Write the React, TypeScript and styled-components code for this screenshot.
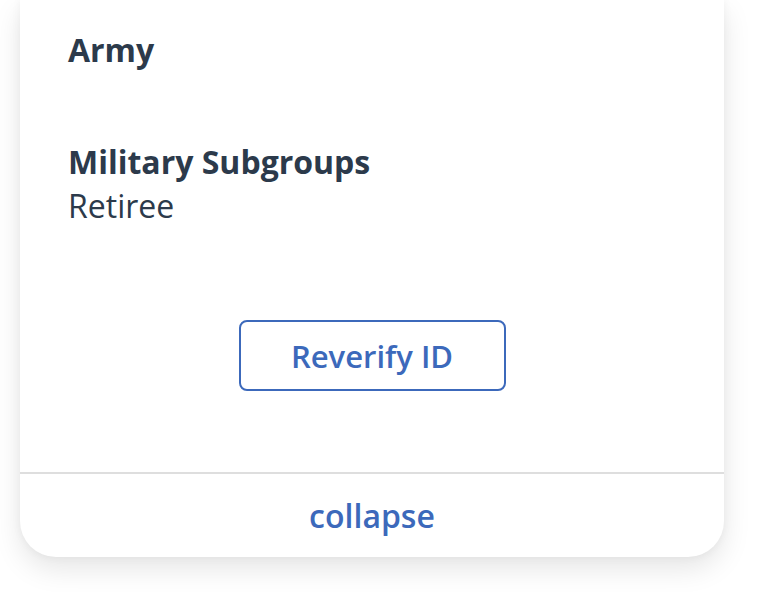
import styled, { createGlobalStyle } from 'styled-components';

const GlobalStyle = createGlobalStyle`
	html, body {
		margin: 0;
		padding: 0;
		background: #ffffff;
		font-family: 'Open Sans', 'Noto Sans', sans-serif;
	}
`;

const Page = styled.div`
	width: 764px;
	height: 592px;
	box-sizing: border-box;
	padding: 0 40px 0 20px;
	overflow: hidden;
`;

const Card = styled.div`
	width: 704px;
	height: 557px;
	background: #ffffff;
	border-radius: 0 0 36px 36px;
	box-shadow: 0 12px 28px rgba(0, 0, 0, 0.1), 0 0 10px rgba(0, 0, 0, 0.05);
	display: flex;
	flex-direction: column;
	box-sizing: border-box;
`;

const Body = styled.div`
	flex: 1;
	padding: 28px 48px 0;
	display: flex;
	flex-direction: column;
`;

const Field = styled.div<{ gap: number }>`
	margin-bottom: ${p => p.gap}px;
`;

const Label = styled.div`
	font-size: 32px;
	font-weight: 700;
	line-height: 44px;
	color: #2c3a4b;
`;

const Value = styled.div`
	font-size: 32px;
	font-weight: 400;
	line-height: 44px;
	color: #2c3a4b;
`;

const ButtonRow = styled.div`
	display: flex;
	justify-content: center;
	margin-top: 92px;
`;

const OutlineButton = styled.button`
	width: 267px;
	height: 71px;
	border: 2px solid #3c69bb;
	border-radius: 8px;
	background: #ffffff;
	color: #3c69bb;
	font-family: 'Open Sans', 'Noto Sans', sans-serif;
	font-size: 31px;
	font-weight: 600;
	cursor: pointer;
`;

const Footer = styled.div`
	border-top: 2px solid #dedede;
	height: 83px;
	display: flex;
	align-items: center;
	justify-content: center;
	color: #3c69bb;
	font-size: 32px;
	font-weight: 600;
`;

export default function App() {
	return (
		<>
			<GlobalStyle />
			<Page>
				<Card>
					<Body>
						<Field gap={68}>
							<Label>Army</Label>
						</Field>
						<Field gap={0}>
							<Label>Military Subgroups</Label>
							<Value>Retiree</Value>
						</Field>
						<ButtonRow>
							<OutlineButton>Reverify ID</OutlineButton>
						</ButtonRow>
					</Body>
					<Footer>collapse</Footer>
				</Card>
			</Page>
		</>
	);
}
